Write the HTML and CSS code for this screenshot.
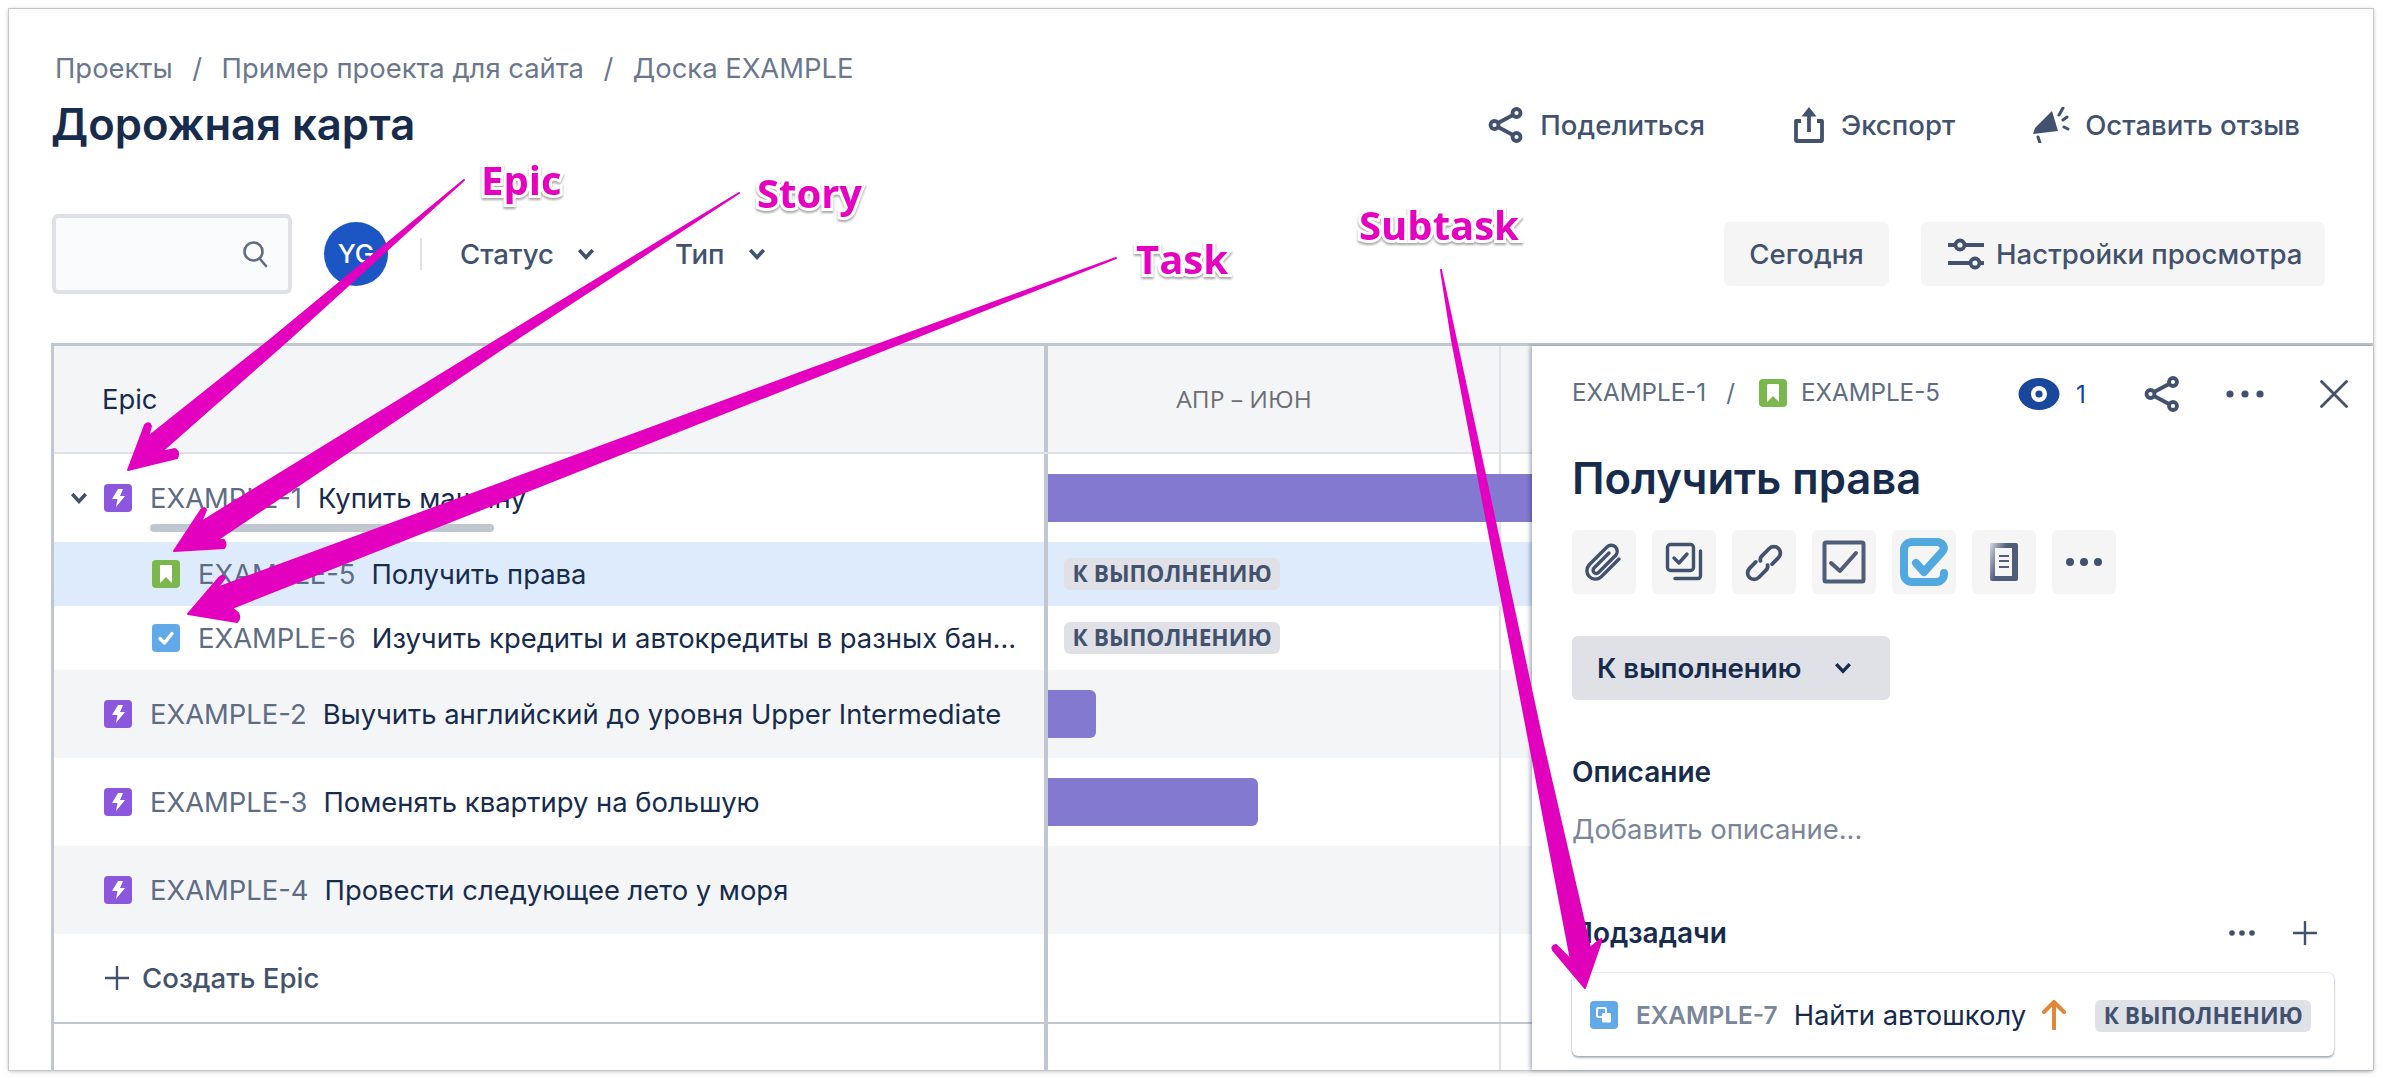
FILE: index.html
```html
<!DOCTYPE html>
<html lang="ru">
<head>
  <meta charset="UTF-8">
  <title>Дорожная карта</title>
  <link rel="stylesheet" href="styles.css">
</head>
<body>
  <div class="window">
    <div class="page-head">
      <div class="crumbs">
        <span>Проекты</span><span class="sep">/</span><span>Пример проекта для сайта</span><span class="sep">/</span><span>Доска EXAMPLE</span>
      </div>
      <div class="title-row">
        <h1>Дорожная карта</h1>
        <div class="actions">
          <div class="action action-share">
            <svg class="ic-36" viewBox="0 0 36 36"><g fill="none" stroke="#42526e" stroke-width="3.800"><circle cx="28.500" cy="6" r="4"/><circle cx="6.500" cy="18" r="4"/><circle cx="28.500" cy="30" r="4"/><path d="M10 16 25 8M10 20l15 8"/></g></svg>
            <span>Поделиться</span>
          </div>
          <div class="action action-export">
            <svg class="ic-36" viewBox="0 0 36 36"><g fill="none" stroke="#42526e" stroke-width="3.800" stroke-linejoin="round"><path d="M10 14H5v19a1 1 0 0 0 1 1h24a1 1 0 0 0 1-1V14h-5"/><path d="M18 25V4"/></g><path d="M18 0l7.500 9.500h-15z" fill="#42526e"/></svg>
            <span>Экспорт</span>
          </div>
          <div class="action action-feedback">
            <svg class="ic-40" viewBox="0 0 40 36"><path d="M20 4 26 24 1 27 3 21z" fill="#42526e"/><g fill="none" stroke="#42526e" stroke-width="3" stroke-linecap="round"><path d="M6 30l2 6M27 8l4-7M31 13l4-3M32 20l4 2"/></g></svg>
            <span>Оставить отзыв</span>
          </div>
        </div>
      </div>
    </div>

    <div class="toolbar">
      <div class="search">
        <svg class="ic-search" viewBox="0 0 26 28"><circle cx="11.500" cy="11.500" r="9" fill="none" stroke="#5e6c84" stroke-width="2.600"/><path d="M18 19l6 7" stroke="#5e6c84" stroke-width="2.600" stroke-linecap="round"/></svg>
      </div>
      <div class="avatar">YG</div>
      <div class="vline"></div>
      <div class="filter filter-status">Статус <svg class="chev" viewBox="0 0 16 12"><path d="M2 2.500l6 6.500 6-6.500" fill="none" stroke="#42526e" stroke-width="3.200"/></svg></div>
      <div class="filter">Тип <svg class="chev" viewBox="0 0 16 12"><path d="M2 2.500l6 6.500 6-6.500" fill="none" stroke="#42526e" stroke-width="3.200"/></svg></div>
      <div class="spacer"></div>
      <div class="btn btn-today">Сегодня</div>
      <div class="btn btn-view">
        <svg class="ic-36" viewBox="0 0 36 36"><g fill="none" stroke="#42526e" stroke-width="3.800"><path d="M0 9h7M17 9h19M0 27h22M32 27h4"/><circle cx="12" cy="9" r="4.500"/><circle cx="27" cy="27" r="4.500"/></g></svg>
        Настройки просмотра
      </div>
    </div>

    <div class="board">
      <div class="roadmap">
        <div class="row row-head">
          <div class="name">Epic</div>
          <div class="tl tl-quarter">АПР – ИЮН</div>
        </div>

        <div class="row row-epic row-open">
          <div class="name">
            <div class="line">
              <svg class="chev chev-row" viewBox="0 0 16 12"><path d="M2 2.500l6 6.500 6-6.500" fill="none" stroke="#42526e" stroke-width="3.200"/></svg>
              <svg class="issue" viewBox="0 0 28 28"><rect width="28" height="28" rx="4" fill="#8b57dc"/><path d="M14 5h5l-3 7h5L12 23l1.500-8H8z" fill="#fff"/></svg>
              <span class="key">EXAMPLE-1</span><span class="txt">Купить машину</span>
            </div>
            <div class="progress"></div>
          </div>
          <div class="tl"><div class="bar bar-long"></div></div>
        </div>

        <div class="row row-child row-selected">
          <div class="name">
            <svg class="issue" viewBox="0 0 28 28"><rect width="28" height="28" rx="4" fill="#7ab84e"/><path d="M8 6a1 1 0 0 1 1-1h10a1 1 0 0 1 1 1V23L14 17 8 23z" fill="#fff"/></svg>
            <span class="key">EXAMPLE-5</span><span class="txt">Получить права</span>
          </div>
          <div class="tl"><span class="loz">К выполнению</span></div>
        </div>

        <div class="row row-child">
          <div class="name">
            <svg class="issue" viewBox="0 0 28 28"><rect width="28" height="28" rx="4" fill="#62a9e8"/><path d="M8 14.500l4.500 4.500L20 9.500" fill="none" stroke="#fff" stroke-width="3.400" stroke-linecap="round" stroke-linejoin="round"/></svg>
            <span class="key">EXAMPLE-6</span><span class="txt txt-cut">Изучить кредиты и автокредиты в разных банках</span>
          </div>
          <div class="tl"><span class="loz">К выполнению</span></div>
        </div>

        <div class="row row-epic row-gray">
          <div class="name">
            <svg class="issue" viewBox="0 0 28 28"><rect width="28" height="28" rx="4" fill="#8b57dc"/><path d="M14 5h5l-3 7h5L12 23l1.500-8H8z" fill="#fff"/></svg>
            <span class="key">EXAMPLE-2</span><span class="txt">Выучить английский до уровня Upper Intermediate</span>
          </div>
          <div class="tl"><div class="bar bar-short"></div></div>
        </div>

        <div class="row row-epic">
          <div class="name">
            <svg class="issue" viewBox="0 0 28 28"><rect width="28" height="28" rx="4" fill="#8b57dc"/><path d="M14 5h5l-3 7h5L12 23l1.500-8H8z" fill="#fff"/></svg>
            <span class="key">EXAMPLE-3</span><span class="txt">Поменять квартиру на большую</span>
          </div>
          <div class="tl"><div class="bar bar-mid"></div></div>
        </div>

        <div class="row row-epic row-gray">
          <div class="name">
            <svg class="issue" viewBox="0 0 28 28"><rect width="28" height="28" rx="4" fill="#8b57dc"/><path d="M14 5h5l-3 7h5L12 23l1.500-8H8z" fill="#fff"/></svg>
            <span class="key">EXAMPLE-4</span><span class="txt">Провести следующее лето у моря</span>
          </div>
          <div class="tl"></div>
        </div>

        <div class="row row-epic row-create">
          <div class="name">
            <svg class="ic-plus" viewBox="0 0 26 26"><path d="M13 1v24M1 13h24" stroke="#42526e" stroke-width="2.400"/></svg>
            Создать Epic
          </div>
          <div class="tl"></div>
        </div>

        <div class="row row-rest">
          <div class="name"></div>
          <div class="tl"></div>
        </div>
      </div>

      <div class="panel">
        <div class="panel-top">
          <div class="panel-crumbs">
            <span>EXAMPLE-1</span><span class="sep-p">/</span>
            <svg class="issue" viewBox="0 0 28 28"><rect width="28" height="28" rx="4" fill="#7ab84e"/><path d="M8 6a1 1 0 0 1 1-1h10a1 1 0 0 1 1 1V23L14 17 8 23z" fill="#fff"/></svg>
            <span>EXAMPLE-5</span>
          </div>
          <div class="panel-tools">
            <svg class="ic-eye" viewBox="0 0 42 32"><ellipse cx="21" cy="16" rx="20.500" ry="16" fill="#18479c"/><circle cx="21" cy="16" r="8" fill="#fff"/><circle cx="21" cy="16" r="3.600" fill="#18479c"/></svg>
            <span class="watch">1</span>
            <svg class="ic-36 ic-share-p" viewBox="0 0 36 36"><g fill="none" stroke="#42526e" stroke-width="3.800"><circle cx="29" cy="6" r="4"/><circle cx="6.500" cy="18" r="4"/><circle cx="29" cy="30" r="4"/><path d="M10 16 25 8M10 20l15 8"/></g></svg>
            <svg class="ic-dots" viewBox="0 0 38 8"><g fill="#42526e"><circle cx="4" cy="4" r="3.600"/><circle cx="19" cy="4" r="3.600"/><circle cx="34" cy="4" r="3.600"/></g></svg>
            <svg class="ic-close" viewBox="0 0 28 28"><path d="M1.500 1.500l25 25M26.500 1.500l-25 25" stroke="#42526e" stroke-width="2.800" stroke-linecap="round"/></svg>
          </div>
        </div>

        <h2>Получить права</h2>

        <div class="quick">
          <div class="qbtn"><svg viewBox="0 0 64 64"><path d="M47 29 29 47A8.500 8.500 0 0 1 17 35L35 17A6 6 0 0 1 43.500 25.500L26.500 42.500A3 3 0 0 1 22 38L37 23" fill="none" stroke="#42526e" stroke-width="3.400" stroke-linecap="round"/></svg></div>
          <div class="qbtn"><svg viewBox="0 0 64 64"><g fill="none" stroke="#42526e" stroke-width="3.400" stroke-linecap="round" stroke-linejoin="round"><rect x="15.500" y="14.500" width="26" height="26" rx="3"/><path d="M48.500 21V46a2.500 2.500 0 0 1-2.500 2.500H23"/><path d="M22 28l5 5 8-9"/></g></svg></div>
          <div class="qbtn"><svg viewBox="0 0 64 64"><g transform="rotate(-45 32 33)" fill="none" stroke="#42526e" stroke-width="3.800" stroke-linecap="round"><path d="M33 37a5 5 0 0 1-4 2.500H18a6.500 6.500 0 0 1 0-13H27"/><path d="M31 29a5 5 0 0 1 4-2.500H46a6.500 6.500 0 0 1 0 13H37"/></g></svg></div>
          <div class="qbtn"><svg viewBox="0 0 64 64"><rect x="12.500" y="12.500" width="39" height="39" rx="1.500" fill="#f5f5f5" stroke="#4f5d78" stroke-width="4"/><path d="M19 33l9 8 16-18" fill="none" stroke="#4f5d78" stroke-width="4" stroke-linecap="round" stroke-linejoin="round"/></svg></div>
          <div class="qbtn"><svg viewBox="0 0 64 64"><path d="M52 43V44A8 8 0 0 1 44 52H20A8 8 0 0 1 12 44V20A8 8 0 0 1 20 12H44C51 12 54 18 50 22L32 42 24 33" fill="none" stroke="#51a9e0" stroke-width="8" stroke-linecap="round" stroke-linejoin="round"/></svg></div>
          <div class="qbtn"><svg viewBox="0 0 64 64"><defs><linearGradient id="docfade" x1="0" y1="0" x2="1" y2="0.500"><stop offset="0" stop-color="#d5d8e0"/><stop offset="0.500" stop-color="#4f5d78"/></linearGradient></defs><rect x="18" y="13" width="28" height="38" rx="2" fill="url(#docfade)"/><rect x="23" y="18" width="17" height="28" fill="#f5f5f5"/><path d="M27 26h10M27 31h10M27 37h10" stroke="#4f5d78" stroke-width="2.200"/></svg></div>
          <div class="qbtn"><svg viewBox="0 0 64 64"><g fill="#42526e"><circle cx="18" cy="32" r="4"/><circle cx="32" cy="32" r="4"/><circle cx="46" cy="32" r="4"/></g></svg></div>
        </div>

        <div class="status">К выполнению <svg class="chev" viewBox="0 0 16 12"><path d="M2 2.500l6 6.500 6-6.500" fill="none" stroke="#172b4d" stroke-width="3"/></svg></div>

        <h3 class="h-desc">Описание</h3>
        <div class="desc">Добавить описание...</div>

        <div class="sub-head">
          <h3>Подзадачи</h3>
          <svg class="ic-dots-sm" viewBox="0 0 26 6"><g fill="#42526e"><circle cx="3" cy="3" r="2.800"/><circle cx="13" cy="3" r="2.800"/><circle cx="23" cy="3" r="2.800"/></g></svg>
          <svg class="ic-plus" viewBox="0 0 26 26"><path d="M13 1v24M1 13h24" stroke="#42526e" stroke-width="2.400"/></svg>
        </div>

        <div class="sub-card">
          <svg class="issue" viewBox="0 0 28 28"><rect width="28" height="28" rx="4" fill="#62a9e8"/><path d="M7 8.500a1.500 1.500 0 0 1 1.500-1.500h6a1.500 1.500 0 0 1 1.500 1.500v6a1.500 1.500 0 0 1-1.500 1.500h-6A1.500 1.500 0 0 1 7 14.500z" fill="none" stroke="#fff" stroke-width="2"/><path d="M12 13.500a1.500 1.500 0 0 1 1.500-1.500h6a1.500 1.500 0 0 1 1.500 1.500V20a1.500 1.500 0 0 1-1.500 1.500h-6A1.500 1.500 0 0 1 12 20z" fill="#fff"/></svg>
          <span class="key key-bold">EXAMPLE-7</span>
          <span class="txt">Найти автошколу</span>
          <svg class="ic-up" viewBox="0 0 24 30"><path d="M12 29V3M2 12l10-10 10 10" fill="none" stroke="#e0873a" stroke-width="4" stroke-linecap="round" stroke-linejoin="round"/></svg>
          <span class="loz loz-card">К выполнению</span>
        </div>
      </div>
    </div>
  </div>

  <!-- пометки поверх скриншота -->
  <svg class="arrows" viewBox="0 0 2382 1080">
    <defs>
      <linearGradient id="pink" x1="0" y1="0" x2="1" y2="1"><stop offset="0" stop-color="#e800c4"/><stop offset="1" stop-color="#df00b8"/></linearGradient>
    </defs>
    <g fill="url(#pink)" stroke="url(#pink)" stroke-width="2" stroke-linejoin="round">
      <path d="M464 180 288 340 161 452 175 449Q180 452 177 458L128 470 145 425Q149 421 151 426L148 437 270 340z"/>
      <path d="M739 193 515 340 217 540 224 540Q227 545 224 548L174 551 201 510Q205 506 206 510L201 522 497 340z"/>
      <path d="M1116 258 800 383 232 608 238 613Q241 618 237 622L188 614 219 578Q223 574 225 578L217 588 800 373z"/>
      <path d="M1441 270 1456 340 1542 740 1590 948 1601 939Q1602 938 1601 942L1585 988 1553 950Q1551 946 1556 945L1571 960 1529 740 1452 340z"/>
    </g>
  </svg>
  <div class="note note-epic">Epic</div>
  <div class="note note-story">Story</div>
  <div class="note note-task">Task</div>
  <div class="note note-subtask">Subtask</div>
</body>
</html>
```

FILE: styles.css
```css
html, body { margin: 0; padding: 0; background: #fff; }
body { width: 2382px; height: 1080px; position: relative; overflow: hidden; font-family: Inter, "Noto Sans", sans-serif; color: #172b4d; }
h1, h2, h3 { margin: 0; }

.window {
  margin: 9px 0 0 9px; width: 2364px; height: 1061px; background: #fff;
  box-shadow: 0 0 0 1px #c8c8c8, 0 1px 5px rgba(0, 0, 0, 0.3);
  display: flex; flex-direction: column;
}

/* шапка */
.page-head { padding: 43px 73px 0 46px; }
.crumbs { height: 32px; line-height: 32px; font-size: 27.400px; color: #6b778c; display: flex; }
.crumbs .sep { margin: 0 19.500px; }
.title-row { display: flex; align-items: center; justify-content: space-between; height: 56px; margin-top: 13px; }
h1 { font-size: 43.600px; font-weight: 600; line-height: 56px; color: #172b4d; margin-left: -4px; }
.actions { display: flex; align-items: center; font-size: 27.600px; font-weight: 500; color: #42526e; }
.action { display: flex; align-items: center; gap: 16px; }
.action-export { margin-left: 86px; gap: 14px; }
.action-feedback { margin-left: 77px; gap: 13px; }
.ic-36 { width: 36px; height: 36px; flex: none; }
.ic-40 { width: 40px; height: 36px; flex: none; }

/* фильтры */
.toolbar { display: flex; align-items: center; height: 80px; margin: 61px 48px 0 43px; }
.search {
  width: 240px; height: 80px; box-sizing: border-box; background: #fafbfc;
  border: 4px solid #dfe1e6; border-radius: 6px;
  display: flex; align-items: center; justify-content: flex-end; padding-right: 20px;
}
.ic-search { width: 26px; height: 28px; }
.avatar {
  width: 64px; height: 64px; border-radius: 50%; background: #1c56c4; color: #fff;
  margin-left: 32px; font-size: 26px; font-weight: 500; line-height: 64px; text-align: center;
}
.vline { width: 2px; height: 32px; background: #dfe1e6; margin: 0 38px 0 32px; }
.filter { display: flex; align-items: center; gap: 23px; font-size: 27.600px; font-weight: 500; color: #42526e; }
.filter-status { margin-right: 80px; }
.chev { width: 18px; height: 14px; flex: none; }
.spacer { flex: 1; }
.btn {
  height: 64px; background: #f5f5f5; border-radius: 6px; display: flex; align-items: center;
  font-size: 27.600px; font-weight: 500; color: #42526e; box-sizing: border-box;
}
.btn-today { width: 165px; justify-content: center; margin-right: 32px; }
.btn-view { width: 404px; padding-left: 27px; gap: 12px; }

/* дорожная карта */
.board { flex: 1; display: flex; margin: 49px 0 0 42px; border-top: 3px solid #c1c7d0; min-height: 0; }
.roadmap { width: 1481px; border-left: 3px solid #c1c7d0; box-sizing: border-box; display: flex; flex-direction: column; }
.row { display: grid; grid-template-columns: 994px 484px; height: 88px; font-size: 27.400px; }
.name { border-right: 4px solid #c1c7d0; display: flex; align-items: center; padding-left: 50px; min-width: 0; }
.tl {
  position: relative; display: flex; align-items: center;
  background: linear-gradient(#dfe1e6, #dfe1e6) no-repeat 451px 0 / 2px 100%;
}
.row-head { background: #f4f5f7; border-bottom: 2px solid #dfe1e6; box-sizing: content-box; height: 106px; }
.row-head .name { padding-left: 48px; }
.tl-quarter {
  justify-content: center; padding-right: 92px; box-sizing: border-box; font-family: "Open Sans", sans-serif;
  font-size: 24.500px; color: #6b6f74; padding-bottom: 2px;
}
.row-gray { background: #f4f5f7; }
.row-child { height: 64px; }
.row-child .name { padding-left: 98px; }
.row-selected { background: #deebfc; }
.row-selected .tl { background-image: none; }
.row-open .name { display: block; padding: 30px 0 0 14px; }
.line { display: flex; align-items: center; height: 28px; }
.chev-row { margin-right: 16px; margin-left: 2px; }
.progress { width: 344px; height: 8px; border-radius: 4px; background: #c1c7d0; margin: 12px 0 0 82px; }
.issue { width: 28px; height: 28px; flex: none; margin-right: 18px; }
.key { color: #5e6c84; margin-right: 16px; white-space: nowrap; }
.txt { color: #172b4d; white-space: nowrap; }
.txt-cut { overflow: hidden; text-overflow: ellipsis; padding-right: 14px; }
.bar { height: 48px; background: #8479d1; }
.bar-long { width: 100%; }
.bar-short { width: 48px; border-radius: 0 6px 6px 0; }
.bar-mid { width: 210px; border-radius: 0 6px 6px 0; }
.loz {
  display: inline-block; height: 32px; line-height: 32px; padding: 0 8.500px; margin-left: 16px;
  background: #dfe1e6; border-radius: 6px; font-family: "Open Sans", sans-serif;
  font-size: 22.700px; font-weight: 700; color: #42526e; text-transform: uppercase; white-space: nowrap;
}
.row-create { border-bottom: 2px solid #c1c7d0; box-sizing: content-box; }
.row-create .name { font-weight: 500; color: #42526e; font-size: 27.600px; }
.ic-plus { width: 26px; height: 26px; flex: none; margin-right: 12px; }
.row-rest { flex: 1; }

/* карточка задачи */
.panel {
  flex: 1; background: #fff; box-sizing: border-box; padding: 30px 39px 0 40px;
  box-shadow: -2px 0 4px rgba(9, 30, 66, 0.35); position: relative; min-width: 0;
}
.panel-top { display: flex; align-items: center; justify-content: space-between; height: 36px; margin-right: -14px; }
.panel-crumbs { display: flex; align-items: center; font-size: 24.200px; color: #5e6c84; padding-bottom: 3px; }
.panel-crumbs .issue { margin-right: 14px; }
.sep-p { margin: 0 24px 0 20px; }
.panel-tools { display: flex; align-items: center; }
.ic-eye { width: 42px; height: 32px; margin-right: 16px; }
.watch { font-size: 24px; color: #0747a6; width: 12px; }
.ic-share-p { margin-left: 56px; }
.ic-dots { width: 38px; height: 8px; margin-left: 46px; }
.ic-close { width: 28px; height: 28px; margin-left: 56px; }
h2 { font-size: 43.600px; font-weight: 600; line-height: 56px; margin: 39px 0 0; }
.quick { display: flex; gap: 16px; margin-top: 23px; }
.qbtn { width: 64px; height: 64px; background: #f5f5f5; border-radius: 6px; }
.qbtn svg { display: block; width: 64px; height: 64px; }
.status {
  width: 318px; height: 64px; margin-top: 42px; padding-left: 25px; box-sizing: border-box;
  background: #dfe1e6; border-radius: 6px; display: flex; align-items: center; gap: 33px;
  font-size: 27.600px; font-weight: 600; color: #172b4d;
}
h3 { font-size: 28px; font-weight: 600; line-height: 32px; }
.h-desc { margin: 56px 0 0; }
.desc { font-size: 27.400px; line-height: 32px; color: #7a869a; margin: 25px 0 0; }
.sub-head { display: flex; align-items: center; height: 32px; margin: 72px 0 0; padding-right: 4px; }
.sub-head h3 { flex: 1; }
.ic-dots-sm { width: 26px; height: 6px; margin-right: 37px; }
.sub-head .ic-plus { margin-right: 12px; }
.sub-card {
  height: 83px; margin-top: 24px; padding-left: 18px; box-sizing: border-box; background: #fff; border-radius: 6px;
  box-shadow: 0 2px 2px rgba(9, 30, 66, 0.3), 0 0 2px rgba(9, 30, 66, 0.3);
  display: flex; align-items: center; font-size: 27.400px;
}
.key-bold { font-weight: 600; color: #7a869a; font-size: 24.400px; }
.ic-up { width: 24px; height: 30px; margin: 0 29px 0 16px; }
.loz-card { margin: 2px 0 0; }

/* пометки */
.arrows { position: absolute; left: 0; top: 0; width: 2382px; height: 1080px; pointer-events: none; }
.note {
  position: absolute; font-family: "Open Sans", sans-serif; font-size: 40px; font-weight: 700; line-height: 44px;
  color: #e600c0; white-space: nowrap;
  -webkit-text-stroke: 6px #fff; paint-order: stroke fill;
  filter: drop-shadow(0 2px 1px rgba(0, 0, 0, 0.35));
}
.note-epic { left: 481px; top: 158px; }
.note-story { left: 757px; top: 171px; }
.note-task { left: 1136px; top: 237px; }
.note-subtask { left: 1359px; top: 203px; }
```
